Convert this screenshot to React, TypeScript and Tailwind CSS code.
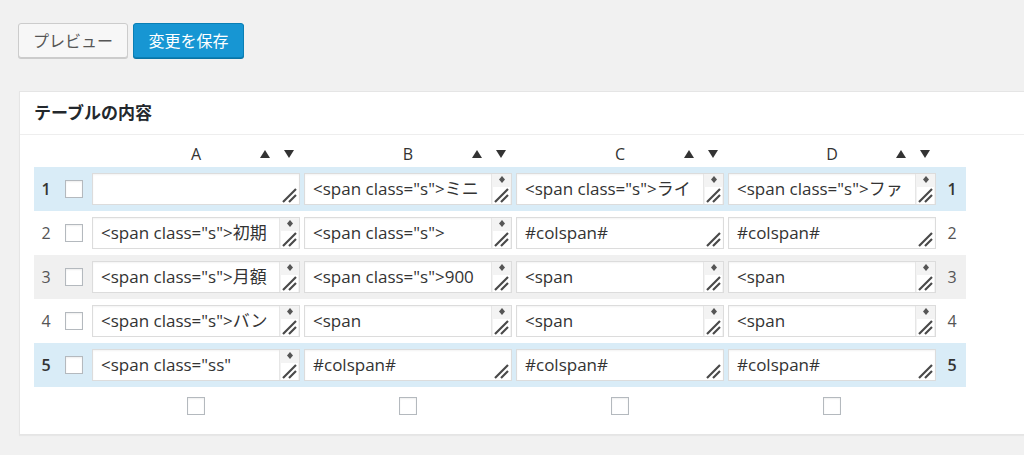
import React from 'react';

type Cell = { text: string; scroll: boolean };

const rows: { n: number; bg: string; cells: Cell[] }[] = [
  {
    n: 1,
    bg: 'bg-[#d9ecf7]',
    cells: [
      { text: '', scroll: false },
      { text: '<span class="s">ミニ', scroll: true },
      { text: '<span class="s">ライ', scroll: true },
      { text: '<span class="s">ファ', scroll: true },
    ],
  },
  {
    n: 2,
    bg: 'bg-white',
    cells: [
      { text: '<span class="s">初期', scroll: true },
      { text: '<span class="s">', scroll: true },
      { text: '#colspan#', scroll: false },
      { text: '#colspan#', scroll: false },
    ],
  },
  {
    n: 3,
    bg: 'bg-[#f0f0f0]',
    cells: [
      { text: '<span class="s">月額', scroll: true },
      { text: '<span class="s">900', scroll: true },
      { text: '<span', scroll: true },
      { text: '<span', scroll: true },
    ],
  },
  {
    n: 4,
    bg: 'bg-white',
    cells: [
      { text: '<span class="s">バン', scroll: true },
      { text: '<span', scroll: true },
      { text: '<span', scroll: true },
      { text: '<span', scroll: true },
    ],
  },
  {
    n: 5,
    bg: 'bg-[#d9ecf7]',
    cells: [
      { text: '<span class="ss"', scroll: true },
      { text: '#colspan#', scroll: false },
      { text: '#colspan#', scroll: false },
      { text: '#colspan#', scroll: false },
    ],
  },
];

function Checkbox() {
  return <div className="w-[18px] h-[18px] border border-[#b4b9be] bg-white shadow-[inset_0_1px_2px_rgba(0,0,0,0.07)]" />;
}

function Grip() {
  return (
    <svg width="17" height="17" viewBox="0 0 17 17">
      <path d="M2 15 L15 2 M8 15 L15 8" stroke="#4a4a4a" strokeWidth="2.2" fill="none" />
    </svg>
  );
}

function Area({ cell }: { cell: Cell }) {
  return (
    <div className="flex h-[32px] border border-[#dcdcdc] bg-white shadow-[inset_0_1px_2px_rgba(0,0,0,0.05)]">
      <div className="flex-1 min-w-0 overflow-hidden whitespace-nowrap pl-[8px] pt-[3px] text-[17px] leading-[23px] text-[#333]">
        {cell.text}
      </div>
      {cell.scroll ? (
        <div className="w-[20px] flex flex-col items-center bg-[#f3f3f3] border-l border-[#e6e6e6]">
          <svg width="8" height="10" viewBox="0 0 8 10" className="mt-[1px]">
            <path d="M4 1 L7 4.5 L4 8 L1 4.5 Z" fill="#555" />
          </svg>
          <div className="mt-auto bg-white">
            <Grip />
          </div>
        </div>
      ) : (
        <div className="w-[20px] flex items-end justify-center">
          <Grip />
        </div>
      )}
    </div>
  );
}

function Arrow({ up }: { up: boolean }) {
  return (
    <svg width="10" height="8" viewBox="0 0 10 8">
      <path d={up ? 'M5 0 L10 8 L0 8 Z' : 'M0 0 L10 0 L5 8 Z'} fill="#333" />
    </svg>
  );
}

export default function App() {
  return (
    <div className="w-[1024px] h-[455px] overflow-hidden bg-[#f1f1f1] pl-[18px] pt-[23px] font-['Open_Sans','Noto_Sans_CJK_JP',sans-serif]">
      <div className="flex gap-[5px]">
        <button className="h-[35px] w-[110px] rounded-[3px] border border-[#cccccc] bg-[#f7f7f7] text-[16px] text-[#555] shadow-[0_1px_0_#ccc]">
          プレビュー
        </button>
        <button className="h-[35px] w-[111px] rounded-[3px] border border-[#0a7fb5] bg-[#1796d3] text-[16px] text-white shadow-[0_1px_0_#0a73a4]">
          変更を保存
        </button>
      </div>

      <div className="mt-[33px] ml-[1px] w-[1020px] h-[344px] bg-white border border-[#e5e5e5] shadow-[0_1px_1px_rgba(0,0,0,0.04)]">
        <div className="h-[43px] flex items-center px-[14px] border-b border-[#eeeeee]">
          <h2 className="text-[17px] font-bold text-[#23282d]">テーブルの内容</h2>
        </div>

        <div className="ml-[14px] mt-[5px] w-[932px]">
          <div className="flex h-[27px] items-center text-[16px] text-[#333]">
            <div className="w-[56px]" />
            {['A', 'B', 'C', 'D'].map((l) => (
              <div key={l} className="w-[212px] flex items-center">
                <div className="w-[44px]" />
                <div className="flex-1 text-center">{l}</div>
                <div className="w-[44px] flex items-center gap-[14px] pl-[2px]">
                  <Arrow up />
                  <Arrow up={false} />
                </div>
              </div>
            ))}
          </div>

          {rows.map((r) => {
            const hl = r.bg === 'bg-[#d9ecf7]';
            return (
              <div key={r.n} className={`flex h-[44px] items-center ${r.bg}`}>
                <div className={`w-[24px] text-center text-[16px] ${hl ? 'text-[#333] font-semibold' : 'text-[#555]'}`}>{r.n}</div>
                <div className="w-[32px] pl-[7px]">
                  <Checkbox />
                </div>
                {r.cells.map((c, i) => (
                  <div key={i} className="w-[212px] px-[2px]">
                    <Area cell={c} />
                  </div>
                ))}
                <div className={`w-[28px] text-center text-[16px] ${hl ? 'text-[#333] font-semibold' : 'text-[#555]'}`}>{r.n}</div>
              </div>
            );
          })}

          <div className="flex h-[38px] items-center">
            <div className="w-[56px]" />
            {[0, 1, 2, 3].map((i) => (
              <div key={i} className="w-[212px] flex justify-center">
                <Checkbox />
              </div>
            ))}
          </div>
        </div>
      </div>
    </div>
  );
}
